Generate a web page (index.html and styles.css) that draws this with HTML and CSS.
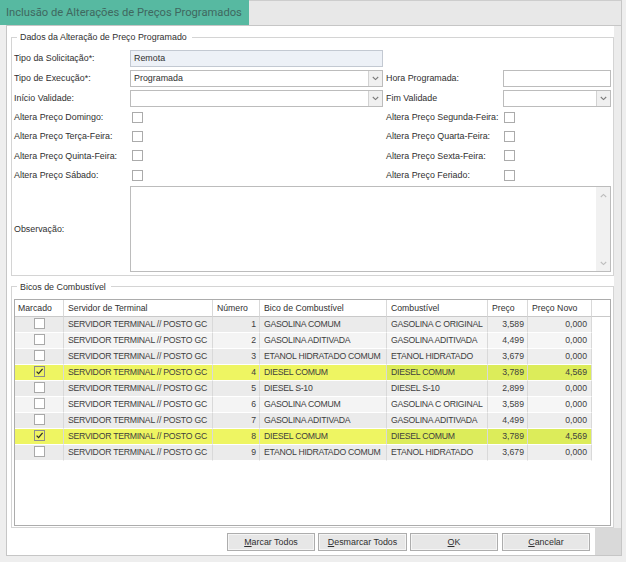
FILE: index.html
```html
<!DOCTYPE html>
<html lang="pt-BR">
<head>
<meta charset="utf-8">
<title>Inclusão de Alterações de Preços Programados</title>
<link rel="stylesheet" href="styles.css">
</head>
<body>
<div class="app">
  <div class="titlebar">
    <div class="tab">Inclusão de Alterações de Preços Programados</div>
    <div class="titlebar-rest"></div>
  </div>
  <div class="window">
    <div class="body">
      <div class="content">
        <fieldset class="group group-dados">
          <legend>Dados da Alteração de Preço Programado</legend>
          <div class="form">
            <div class="lbl lbl-input">Tipo da Solicitação*:</div>
            <div class="input readonly">Remota</div>
            <div></div><div></div>

            <div class="lbl lbl-input">Tipo de Execução*:</div>
            <div class="input select"><span class="select-value">Programada</span><span class="select-btn"><svg width="7" height="5" viewBox="0 0 7 5"><path d="M0.8 1 L3.5 3.6 L6.2 1" fill="none" stroke="#7a7a7a" stroke-width="1.1"/></svg></span></div>
            <div class="lbl lbl-input lbl-right">Hora Programada:</div>
            <div class="input"></div>

            <div class="lbl lbl-input">Início Validade:</div>
            <div class="input select"><span class="select-value"></span><span class="select-btn"><svg width="7" height="5" viewBox="0 0 7 5"><path d="M0.8 1 L3.5 3.6 L6.2 1" fill="none" stroke="#7a7a7a" stroke-width="1.1"/></svg></span></div>
            <div class="lbl lbl-input lbl-right">Fim Validade</div>
            <div class="input select"><span class="select-value"></span><span class="select-btn"><svg width="7" height="5" viewBox="0 0 7 5"><path d="M0.8 1 L3.5 3.6 L6.2 1" fill="none" stroke="#7a7a7a" stroke-width="1.1"/></svg></span></div>

            <div class="lbl">Altera Preço Domingo:</div>
            <div class="check"></div>
            <div class="lbl lbl-right">Altera Preço Segunda-Feira:</div>
            <div class="check check-right"></div>

            <div class="lbl">Altera Preço Terça-Feira:</div>
            <div class="check"></div>
            <div class="lbl lbl-right">Altera Preço Quarta-Feira:</div>
            <div class="check check-right"></div>

            <div class="lbl">Altera Preço Quinta-Feira:</div>
            <div class="check"></div>
            <div class="lbl lbl-right">Altera Preço Sexta-Feira:</div>
            <div class="check check-right"></div>

            <div class="lbl">Altera Preço Sábado:</div>
            <div class="check"></div>
            <div class="lbl lbl-right">Altera Preço Feriado:</div>
            <div class="check check-right"></div>

            <div class="lbl">Observação:</div>
            <div class="memo">
              <div class="vscroll">
                <svg width="7" height="5" viewBox="0 0 7 5"><path d="M0.8 4 L3.5 1.4 L6.2 4" fill="none" stroke="#bdbdbd" stroke-width="1.1"/></svg>
                <svg width="7" height="5" viewBox="0 0 7 5"><path d="M0.8 1 L3.5 3.6 L6.2 1" fill="none" stroke="#bdbdbd" stroke-width="1.1"/></svg>
              </div>
            </div>
          </div>
        </fieldset>

        <fieldset class="group group-bicos">
          <legend>Bicos de Combustível</legend>
          <div class="grid">
            <table class="grid-table">
              <colgroup>
                <col class="c-mark"><col class="c-serv"><col class="c-num"><col class="c-bico"><col class="c-comb"><col class="c-preco"><col class="c-novo"><col class="c-fill">
              </colgroup>
              <thead>
                <tr>
                  <th class="th-mark">Marcado</th>
                  <th>Servidor de Terminal</th>
                  <th>Número</th>
                  <th>Bico de Combustível</th>
                  <th>Combustível</th>
                  <th>Preço</th>
                  <th>Preço Novo</th>
                  <th class="fill"></th>
                </tr>
              </thead>
              <tbody>
                <tr class="odd"><td class="mark"><span class="cb"></span></td><td>SERVIDOR TERMINAL // POSTO GC</td><td class="num">1</td><td>GASOLINA COMUM</td><td class="hl">GASOLINA C ORIGINAL</td><td class="num hl">3,589</td><td class="num novo hl">0,000</td><td class="fill"></td></tr>
                <tr class="even"><td class="mark"><span class="cb"></span></td><td>SERVIDOR TERMINAL // POSTO GC</td><td class="num">2</td><td>GASOLINA ADITIVADA</td><td class="hl">GASOLINA ADITIVADA</td><td class="num hl">4,499</td><td class="num novo hl">0,000</td><td class="fill"></td></tr>
                <tr class="odd"><td class="mark"><span class="cb"></span></td><td>SERVIDOR TERMINAL // POSTO GC</td><td class="num">3</td><td>ETANOL HIDRATADO COMUM</td><td class="hl">ETANOL HIDRATADO</td><td class="num hl">3,679</td><td class="num novo hl">0,000</td><td class="fill"></td></tr>
                <tr class="sel"><td class="mark"><span class="cb cb-on"><svg width="9" height="9" viewBox="0 0 9 9"><path d="M1.6 4.6 L3.6 6.6 L7.6 1.8" fill="none" stroke="#2e2e2e" stroke-width="1.3"/></svg></span></td><td>SERVIDOR TERMINAL // POSTO GC</td><td class="num">4</td><td>DIESEL COMUM</td><td class="hl">DIESEL COMUM</td><td class="num hl">3,789</td><td class="num novo hl">4,569</td><td class="fill"></td></tr>
                <tr class="odd"><td class="mark"><span class="cb"></span></td><td>SERVIDOR TERMINAL // POSTO GC</td><td class="num">5</td><td>DIESEL S-10</td><td class="hl">DIESEL S-10</td><td class="num hl">2,899</td><td class="num novo hl">0,000</td><td class="fill"></td></tr>
                <tr class="even"><td class="mark"><span class="cb"></span></td><td>SERVIDOR TERMINAL // POSTO GC</td><td class="num">6</td><td>GASOLINA COMUM</td><td class="hl">GASOLINA C ORIGINAL</td><td class="num hl">3,589</td><td class="num novo hl">0,000</td><td class="fill"></td></tr>
                <tr class="odd"><td class="mark"><span class="cb"></span></td><td>SERVIDOR TERMINAL // POSTO GC</td><td class="num">7</td><td>GASOLINA ADITIVADA</td><td class="hl">GASOLINA ADITIVADA</td><td class="num hl">4,499</td><td class="num novo hl">0,000</td><td class="fill"></td></tr>
                <tr class="sel"><td class="mark"><span class="cb cb-on"><svg width="9" height="9" viewBox="0 0 9 9"><path d="M1.6 4.6 L3.6 6.6 L7.6 1.8" fill="none" stroke="#2e2e2e" stroke-width="1.3"/></svg></span></td><td>SERVIDOR TERMINAL // POSTO GC</td><td class="num">8</td><td>DIESEL COMUM</td><td class="hl">DIESEL COMUM</td><td class="num hl">3,789</td><td class="num novo hl">4,569</td><td class="fill"></td></tr>
                <tr class="odd"><td class="mark"><span class="cb"></span></td><td>SERVIDOR TERMINAL // POSTO GC</td><td class="num">9</td><td>ETANOL HIDRATADO COMUM</td><td class="hl">ETANOL HIDRATADO</td><td class="num hl">3,679</td><td class="num novo hl">0,000</td><td class="fill"></td></tr>
              </tbody>
            </table>
          </div>
        </fieldset>
      </div>
      <div class="strip"></div>
    </div>
    <div class="footer">
      <div class="buttons">
        <button class="btn btn-marcar"><u>M</u>arcar Todos</button>
        <button class="btn btn-desmarcar"><u>D</u>esmarcar Todos</button>
        <button class="btn btn-ok"><u>O</u>K</button>
        <button class="btn btn-cancelar"><u>C</u>ancelar</button>
      </div>
      <div class="grip"></div>
    </div>
  </div>
</div>
</body>
</html>
```

FILE: styles.css
```css
html, body {
  margin: 0;
  padding: 0;
}
body {
  width: 626px;
  height: 562px;
  overflow: hidden;
  background: #eeeeee;
  font-family: "Liberation Sans", Arial, sans-serif;
  font-size: 8.9px;
  color: #303030;
}
.app {
  width: 622px;
}
.titlebar {
  display: flex;
  height: 25px;
}
.tab {
  width: 249px;
  box-sizing: border-box;
  padding-left: 6px;
  background: #57b9a1;
  color: #3f685f;
  font-family: Roboto, "Liberation Sans", sans-serif;
  font-size: 11.2px;
  line-height: 25px;
  white-space: nowrap;
  overflow: hidden;
}
.titlebar-rest {
  flex: 1;
  background: #e8e8e8;
  border-top: 1px solid #cdcdcd;
  border-right: 1px solid #c6c6c6;
}
.window {
  margin-left: 6px;
  width: 616px;
  height: 531px;
  box-sizing: border-box;
  border: 1px solid #c6c6c6;
  background: #ffffff;
  display: flex;
  flex-direction: column;
}
.body {
  flex: 1;
  display: flex;
  min-height: 0;
}
.content {
  width: 607px;
  background: #ffffff;
}
.strip {
  flex: 1;
  background: #ececec;
}
.group {
  margin: 5px 0 0 4px;
  border: 1px solid #d4d4d4;
  min-width: 0;
}
.group legend {
  margin-left: 3px;
  padding: 0 5px 0 3px;
  font-size: 8.9px;
  line-height: 12px;
  color: #303030;
}
.group-dados {
  padding: 6.5px 2px 2.5px 2px;
}
.group-bicos {
  padding: 6px 2px 1px 2px;
}
.form {
  display: grid;
  grid-template-columns: 116px 253px 120px 108px;
  grid-template-rows: 20px 20px 18px repeat(4, 19.33px) 87.5px;
}
.lbl {
  align-self: center;
  white-space: nowrap;
}
.lbl-input {
  align-self: start;
  line-height: 17px;
}
.lbl-right {
  padding-left: 3px;
}
.input {
  align-self: start;
  height: 17px;
  box-sizing: border-box;
  border: 1px solid #bcbcbc;
  background: #ffffff;
  padding: 0 3px;
  line-height: 15px;
  white-space: nowrap;
}
.readonly {
  background: #edf1f7;
  border-color: #c3c9d2;
}
.select {
  display: flex;
  padding: 0 0 0 3px;
}
.select-value {
  flex: 1;
}
.select-btn {
  width: 13px;
  border-left: 1px solid #d2d2d2;
  background: #f0f0f0;
  display: flex;
  align-items: center;
  justify-content: center;
}
.check {
  align-self: center;
  width: 11px;
  height: 11px;
  box-sizing: border-box;
  border: 1px solid #ababab;
  background: #ffffff;
  margin-left: 2px;
}
.check-right {
  margin-left: 1px;
}
.memo {
  grid-column: 2 / 5;
  align-self: end;
  height: 86px;
  box-sizing: border-box;
  border: 1px solid #bcbcbc;
  display: flex;
  justify-content: flex-end;
}
.vscroll {
  width: 14px;
  background: #f1f1f1;
  display: flex;
  flex-direction: column;
  justify-content: space-between;
  align-items: center;
  padding: 6px 0 5px;
}
.grid {
  height: 227px;
  box-sizing: border-box;
  border: 1px solid #acacac;
  background: #ffffff;
  overflow: hidden;
}
.grid-table {
  table-layout: fixed;
  border-collapse: separate;
  border-spacing: 0;
  width: 595px;
  font-size: 8.7px;
  color: #3e3e3e;
}
.c-mark { width: 49px; }
.c-serv { width: 149px; }
.c-num { width: 47px; }
.c-bico { width: 127px; }
.c-comb { width: 101px; }
.c-preco { width: 40px; }
.c-novo { width: 64px; }
.c-fill { width: 18px; }
.grid-table thead tr {
  height: 17px;
}
.grid-table th {
  padding: 0 0 0 4px;
  text-align: left;
  font-weight: normal;
  color: #303030;
  background: #ffffff;
  border-right: 1px solid #d9d9d9;
  border-bottom: 1px solid #c9c9c9;
  line-height: 16px;
  white-space: nowrap;
  overflow: hidden;
}
.grid-table th.th-mark {
  padding-left: 3px;
}
.grid-table th.fill {
  border-right: none;
}
.grid-table tbody tr {
  height: 16px;
}
.grid-table td {
  padding: 0 0 0 4px;
  line-height: 15px;
  border-right: 1px solid #d9d9d9;
  border-bottom: 1px solid #ffffff;
  white-space: nowrap;
  overflow: hidden;
  letter-spacing: -0.26px;
}
.grid-table td.num {
  text-align: right;
  padding: 0 3px 0 0;
  letter-spacing: 0;
}
.grid-table td.novo {
  padding-right: 4px;
}
.grid-table td.mark {
  text-align: center;
  padding: 0;
}
.grid-table td.fill {
  background: #ffffff;
  border: none;
}
tr.odd td { background: #ebebeb; }
tr.even td { background: #f4f4f4; }
tr.odd td.hl { background: #eeeeee; }
tr.even td.hl { background: #f6f6f6; }
tr.sel td { background: #eef562; }
tr.sel td.hl { background: #dcec5a; }
tr td.fill { background: #ffffff; }
.cb {
  display: inline-block;
  width: 11px;
  height: 11px;
  box-sizing: border-box;
  border: 1px solid #a9a9a9;
  background: #ffffff;
  vertical-align: middle;
  position: relative;
  top: -1px;
}
.cb-on {
  background: transparent;
  border-color: #8c8c8c;
}
.cb-on svg {
  display: block;
}
.footer {
  height: 27px;
  display: flex;
}
.buttons {
  flex: 1;
  display: flex;
  justify-content: flex-end;
  gap: 3px;
  padding: 5px 5px 0 0;
}
.btn {
  height: 18px;
  box-sizing: border-box;
  border: 1px solid #adadad;
  background: #e7e7e7;
  box-shadow: inset 0 0 0 1px #f5f5f5;
  font-family: "Liberation Sans", Arial, sans-serif;
  font-size: 8.9px;
  color: #303030;
  padding: 0;
  margin: 0;
}
.btn-marcar { width: 88px; }
.btn-desmarcar { width: 89px; }
.btn-ok { width: 88px; margin-right: 1px; }
.btn-cancelar { width: 88px; }
.grip {
  width: 26px;
  background: #d9d9d9;
}
```
